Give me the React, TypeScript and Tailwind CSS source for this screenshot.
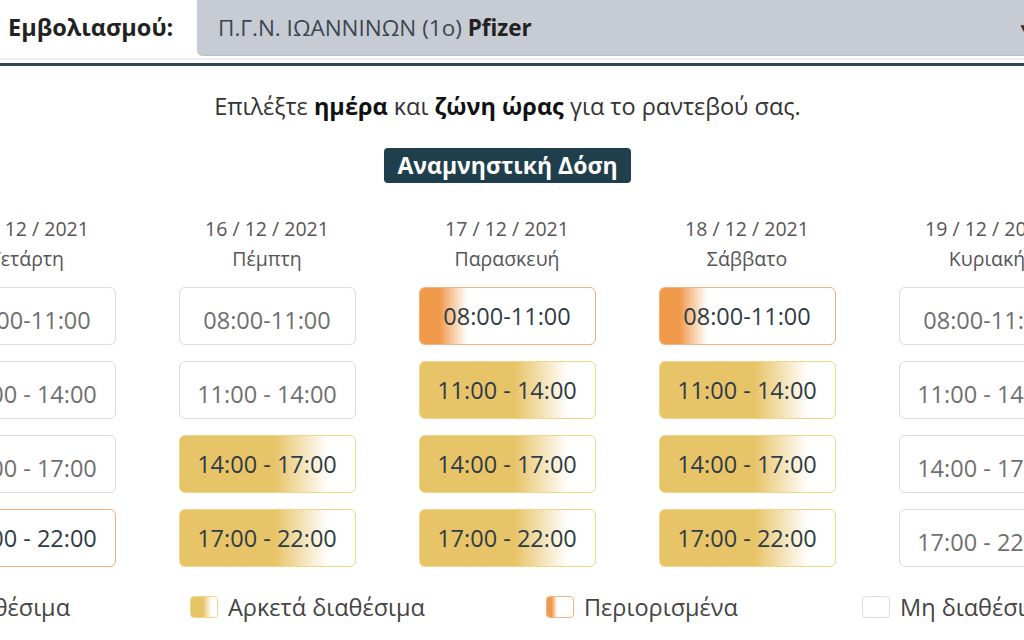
import React from "react";

type Kind = "none" | "gold" | "orange";

const slots = ["08:00-11:00", "11:00 - 14:00", "14:00 - 17:00", "17:00 - 22:00"];

const days: { date: string; name: string; kinds: Kind[] }[] = [
  { date: "15 / 12 / 2021", name: "Τετάρτη", kinds: ["none", "none", "none", "orange"] },
  { date: "16 / 12 / 2021", name: "Πέμπτη", kinds: ["none", "none", "gold", "gold"] },
  { date: "17 / 12 / 2021", name: "Παρασκευή", kinds: ["orange", "gold", "gold", "gold"] },
  { date: "18 / 12 / 2021", name: "Σάββατο", kinds: ["orange", "gold", "gold", "gold"] },
  { date: "19 / 12 / 2021", name: "Κυριακή", kinds: ["none", "none", "none", "none"] },
];

function Slot({ label, kind }: { label: string; kind: Kind }) {
  if (kind === "gold") {
    return (
      <div className="w-[177px] h-[58px] rounded-[6px] border border-[#f0d58a] bg-[linear-gradient(to_right,#e8c468_54%,#ffffff_85%)] flex items-center justify-center pt-[2px] text-[23.5px] text-[#2f3b45]">
        {label}
      </div>
    );
  }
  if (kind === "orange") {
    return (
      <div className="w-[177px] h-[58px] rounded-[6px] border border-[#f6b27e] bg-[linear-gradient(to_right,#f0994b_11%,#ffffff_27%)] flex items-center justify-center pt-[2px] text-[23.5px] text-[#2f3b45]">
        {label}
      </div>
    );
  }
  return (
    <div className="w-[177px] h-[58px] rounded-[6px] border border-[#dcdcdc] bg-white flex items-center justify-center pt-[10px] text-[23.5px] text-[#6f6f6f]">
      {label}
    </div>
  );
}

export default function App() {
  return (
    <div
      className="w-[1024px] h-[640px] overflow-hidden bg-white text-[#333]"
      style={{ fontFamily: '"Open Sans", "Noto Sans", sans-serif' }}
    >
      {/* header */}
      <div className="flex items-center h-[56px]">
        <div className="pl-[8px] w-[197px] shrink-0 text-[23.5px] font-bold text-[#222] whitespace-nowrap">Εμβολιασμού:</div>
        <div className="flex-1 h-[56px] bg-[#c7ccd4] rounded-bl-[6px] border-b border-[#b9bec6] flex items-center pl-[21px] text-[22.5px] text-[#3c4650] whitespace-nowrap">
          <span>
            Π.Γ.Ν. ΙΩΑΝΝΙΝΩΝ (1ο) <b className="text-[#222]">Pfizer</b>
          </span>
          <span className="ml-auto mr-[-6px] text-[12px] text-[#333]">▼</span>
        </div>
      </div>
      <div className="mt-[2px] h-[2px] bg-[#eef0f2]" />
      <div className="mt-[3px] h-[3px] bg-[#2b4a55]" />

      {/* instruction */}
      <div className="mt-[25px] pr-[9px] text-center text-[23.5px] leading-[30px] text-[#333] whitespace-nowrap">
        Επιλέξτε <b className="text-[#111]">ημέρα</b> και <b className="text-[#111]">ζώνη ώρας</b> για το ραντεβού σας.
      </div>

      <div className="mt-[27px] pr-[9px] flex justify-center">
        <div className="h-[35px] px-[13px] rounded-[4px] bg-[#1f3f4c] text-white font-bold text-[23px] flex items-center whitespace-nowrap">
          Αναμνηστική Δόση
        </div>
      </div>

      {/* days */}
      <div className="mt-[31px] w-[1200px] ml-[-93px] flex">
        {days.map((d) => (
          <div key={d.date} className="w-[240px] shrink-0 flex flex-col items-center">
            <div className="text-[19.5px] leading-[30px] text-[#555] whitespace-nowrap">{d.date}</div>
            <div className="text-[19.5px] leading-[30px] text-[#555] whitespace-nowrap">{d.name}</div>
            <div className="mt-[13px] flex flex-col gap-[16px]">
              {slots.map((s, i) => (
                <Slot key={s} label={s} kind={d.kinds[i]} />
              ))}
            </div>
          </div>
        ))}
      </div>

      {/* legend */}
      <div className="mt-[26px] ml-[-80px] flex gap-[120px] text-[23.5px] leading-[28px] text-[#444] whitespace-nowrap">
        <div className="w-[150px] shrink-0 flex items-center justify-end">
          <span className="w-[28px] h-[22px] shrink-0 mr-[10px] rounded-[4px] bg-[#8fc46a]" />
          <span>Διαθέσιμα</span>
        </div>
        <div className="w-[236px] shrink-0 flex items-center">
          <span className="w-[28px] h-[22px] shrink-0 mr-[10px] rounded-[4px] border border-[#f0d58a] bg-[linear-gradient(to_right,#e8c468_45%,#ffffff_80%)]" />
          <span>Αρκετά διαθέσιμα</span>
        </div>
        <div className="w-[196px] shrink-0 flex items-center">
          <span className="w-[28px] h-[22px] shrink-0 mr-[10px] rounded-[4px] border border-[#f6b27e] bg-[linear-gradient(to_right,#f0994b_18%,#ffffff_40%)]" />
          <span>Περιορισμένα</span>
        </div>
        <div className="w-[200px] shrink-0 flex items-center">
          <span className="w-[28px] h-[22px] shrink-0 mr-[10px] rounded-[4px] border border-[#dcdcdc] bg-white" />
          <span>Μη διαθέσιμα</span>
        </div>
      </div>
    </div>
  );
}
